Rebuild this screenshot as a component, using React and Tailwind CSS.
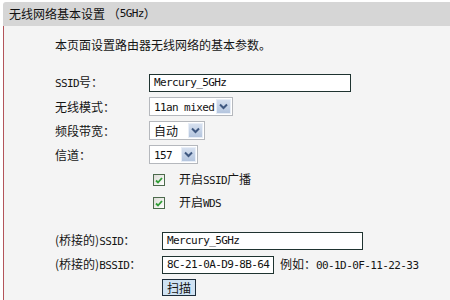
import React from "react";

const CN = "font-['SimSun','Noto_Sans_CJK_SC',sans-serif]";
const M = ({ children }) => (
  <span className="font-['DejaVu_Sans_Mono',monospace] text-[11px] tracking-[-0.6px]">{children}</span>
);

function Select({ value, width, mono = true }) {
  return (
    <div
      className="flex items-center h-[19px] bg-white border border-[#b5b8bd] pl-[4px] pr-[1px]"
      style={{ width }}
    >
      <span className="flex-1 text-[12px] leading-none text-[#111]">
        {mono ? <M>{value}</M> : value}
      </span>
      <span className="w-[15px] h-[15px] flex items-center justify-center bg-gradient-to-b from-[#d6e0ef] to-[#b4c5de] border border-[#e8eef7]">
        <svg width="9" height="7" viewBox="0 0 9 7">
          <path d="M1 1.5 L4.5 5 L8 1.5" stroke="#3f5880" strokeWidth="2" fill="none" />
        </svg>
      </span>
    </div>
  );
}

function Check() {
  return (
    <span className="w-[12px] h-[12px] border border-[#4c6a4c] bg-gradient-to-br from-[#dcdcd6] to-[#ffffff] flex items-center justify-center">
      <svg width="8" height="7" viewBox="0 0 8 7">
        <path d="M1 3.5 L3 5.5 L7 1" stroke="#2f9e35" strokeWidth="1.8" fill="none" />
      </svg>
    </span>
  );
}

function Input({ value, width }) {
  return (
    <div
      className="h-[18px] bg-white border border-[#1f3330] flex items-center pl-[4px] text-[#111]"
      style={{ width }}
    >
      <M>{value}</M>
    </div>
  );
}

export default function App() {
  return (
    <div className={`w-[450px] h-[300px] bg-white pl-[3px] pt-[2px] overflow-hidden text-[12px] text-[#151515] ${CN}`}>
      <div className="h-[24px] bg-[#d6d6d6] rounded-tl-[3px] flex items-center pl-[6px] text-[12px] text-[#111]">
        无线网络基本设置 （ <M>5GHz</M> ）
      </div>
      <div className="h-[274px] bg-[#f4f4f4] border-l border-[#b3545a] flex flex-col pl-[51px]">
        <div className="mt-[11px] h-[16px] leading-[16px]">本页面设置路由器无线网络的基本参数。</div>

        <div className="mt-[21px] flex items-center h-[18px]">
          <span className="w-[94px]"><M>SSID</M>号：</span>
          <Input value="Mercury_5GHz" width={202} />
        </div>
        <div className="mt-[5px] flex items-center h-[19px]">
          <span className="w-[94px]">无线模式：</span>
          <Select value="11an mixed" width={84} />
        </div>
        <div className="mt-[5px] flex items-center h-[19px]">
          <span className="w-[94px]">频段带宽：</span>
          <Select value="自动" width={56} mono={false} />
        </div>
        <div className="mt-[5px] flex items-center h-[19px]">
          <span className="w-[94px]">信道：</span>
          <Select value="157" width={49} />
        </div>

        <div className="mt-[7px] flex items-center h-[18px] pl-[98px]">
          <Check />
          <span className="ml-[14px]">开启<M>SSID</M>广播</span>
        </div>
        <div className="mt-[5px] flex items-center h-[18px] pl-[98px]">
          <Check />
          <span className="ml-[14px]">开启<M>WDS</M></span>
        </div>

        <div className="mt-[20px] flex items-center h-[18px]">
          <span className="w-[107px]">(桥接的)<M>SSID</M>：</span>
          <Input value="Mercury_5GHz" width={201} />
        </div>
        <div className="mt-[6px] flex items-center h-[18px]">
          <span className="w-[107px]">(桥接的)<M>BSSID</M>：</span>
          <Input value="8C-21-0A-D9-8B-64" width={112} />
          <span className="ml-[6px]">例如：<M>00-1D-0F-11-22-33</M></span>
        </div>
        <div className="mt-[5px] pl-[107px]">
          <button className="h-[17px] px-[4px] bg-[#cfe2f3] border border-[#1c2c3a] text-[12px] leading-none flex items-center">
            扫描
          </button>
        </div>
      </div>
    </div>
  );
}
